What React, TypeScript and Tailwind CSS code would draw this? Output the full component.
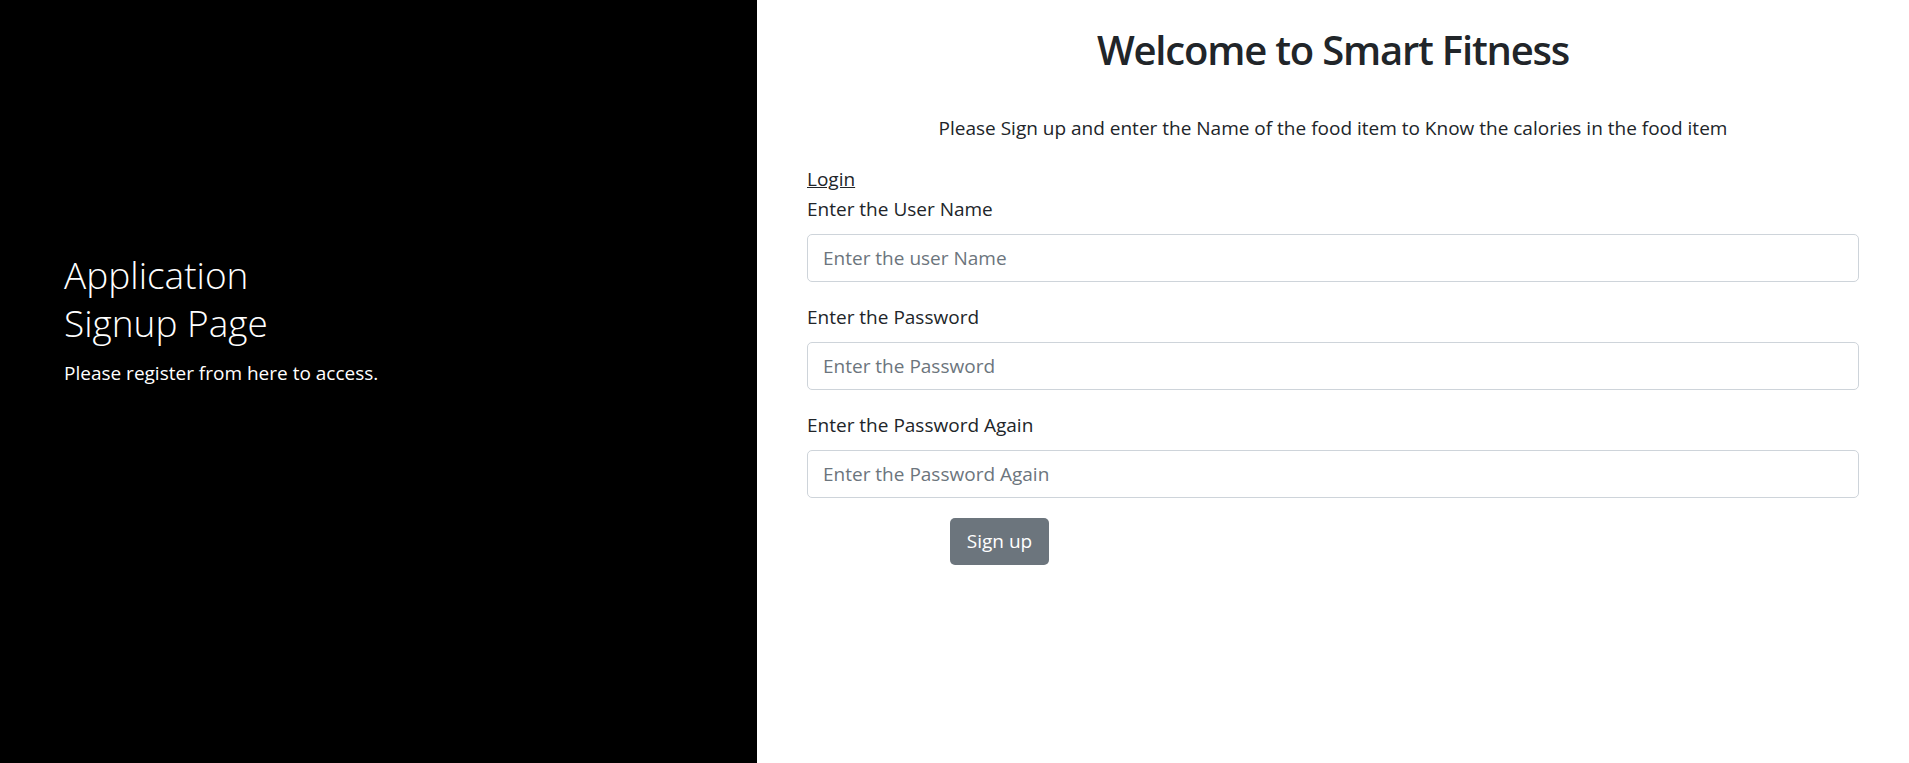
export default function App() {
  const font = { fontFamily: '"Segoe UI", "Open Sans", "Liberation Sans", sans-serif' };

  return (
    <div className="flex min-h-[763px] w-full bg-white text-[#212529]" style={font}>
      {/* left black panel */}
      <div className="w-[757px] shrink-0 bg-black pl-[64px] pt-[251px] text-white">
        <h3 className="text-[37px] font-light leading-[48px]">
          Application
          <br />
          Signup Page
        </h3>
        <p className="mt-[11px] text-[19px] leading-[30px]">Please register from here to access.</p>
      </div>

      {/* right form panel */}
      <div className="flex-1">
        <h2 className="mt-[26px] text-center text-[40px] font-semibold leading-[48px] tracking-[-1.2px]">
          Welcome to Smart Fitness
        </h2>
        <p className="mt-[39px] text-center text-[19px] leading-[30px]">
          Please Sign up and enter the Name of the food item to Know the calories in the food item
        </p>

        <div className="mt-[21px] px-[50px]">
          <a href="#" className="block text-[19px] leading-[30px] text-[#212529] underline">
            Login
          </a>

          <div className="mb-[20px]">
            <label className="mb-[10px] block text-[19px] leading-[30px]">Enter the User Name</label>
            <input
              type="text"
              placeholder="Enter the user Name"
              className="block h-[48px] w-full rounded-[5px] border border-[#ced4da] px-[15px] text-[19px] placeholder:text-[#6c757d] focus:outline-none"
            />
          </div>

          <div className="mb-[20px]">
            <label className="mb-[10px] block text-[19px] leading-[30px]">Enter the Password</label>
            <input
              type="password"
              placeholder="Enter the Password"
              className="block h-[48px] w-full rounded-[5px] border border-[#ced4da] px-[15px] text-[19px] placeholder:text-[#6c757d] focus:outline-none"
            />
          </div>

          <div className="mb-[20px]">
            <label className="mb-[10px] block text-[19px] leading-[30px]">Enter the Password Again</label>
            <input
              type="password"
              placeholder="Enter the Password Again"
              className="block h-[48px] w-full rounded-[5px] border border-[#ced4da] px-[15px] text-[19px] placeholder:text-[#6c757d] focus:outline-none"
            />
          </div>

          <button className="ml-[143px] h-[47px] w-[99px] rounded-[5px] bg-[#6c757d] text-[19px] text-white">
            Sign up
          </button>
        </div>
      </div>
    </div>
  );
}
